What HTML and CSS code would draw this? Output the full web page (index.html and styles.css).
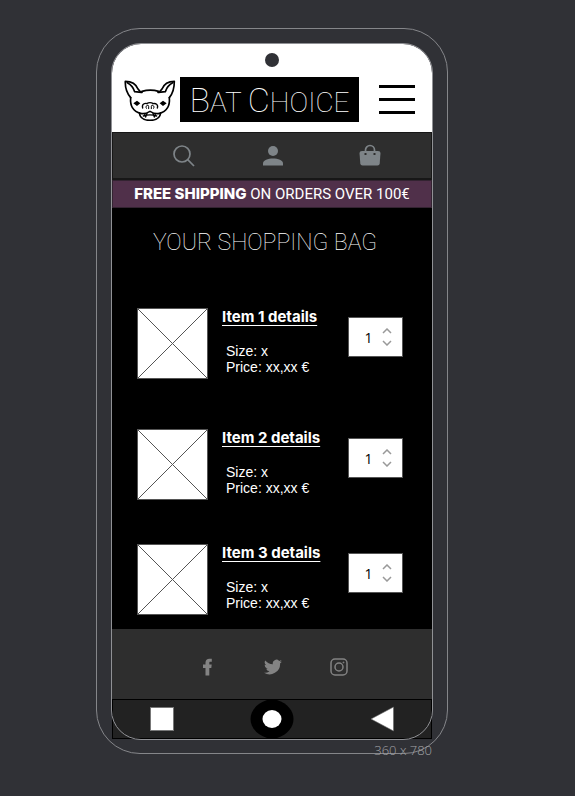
FILE: index.html
```html
<!DOCTYPE html>
<html lang="en">
<head>
<meta charset="utf-8">
<meta name="viewport" content="width=device-width, initial-scale=1">
<title>Bat Choice – Your shopping bag</title>
<link rel="stylesheet" href="styles.css">
</head>
<body>
<div class="phone">
  <div class="screen">
    <header class="header">
      <span class="camera"></span>
      <div class="brand-row">
        <svg class="bat" viewBox="12 18 156 126" aria-hidden="true">
          <g fill="none" stroke="#000" stroke-width="5" stroke-linejoin="round" stroke-linecap="round">
            <path d="M32 74C20 60 15 44 16 25C34 25 48 33 54 48C58 54 62 57 66 58"/>
            <path d="M148 74C160 60 163 44 163 25C145 25 132 33 126 48C122 54 118 57 114 58"/>
            <path d="M22 29C32 34 40 43 44 56L64 58M158 29C148 34 140 43 136 56L116 58"/>
            <path d="M66 55C80 51 102 51 116 55"/>
            <path d="M32 74C30 96 38 115 62 121C72 124 82 120 90 115C98 120 108 124 118 121C142 115 150 96 148 74"/>
            <path d="M58 120C60 136 74 142 90 142C106 142 120 136 122 120"/>
            <path stroke-width="4" d="M68 105C64 92 76 90 80 92C86 88 94 88 100 92C106 90 116 94 112 105"/>
            <path stroke-width="3" d="M79 106C74 99 85 92 86 100V107M101 106C106 99 95 92 94 100V107"/>
            <path stroke-width="4" d="M74 123L77 132L81 121M106 123L103 132L99 121M70 129C82 125 98 125 110 129"/>
          </g>
          <path d="M40 91L51 83L61 91L51 99ZM119 91L129 83L140 91L129 99Z"/>
        </svg>
        <h1 class="brand"><span class="brand-cap">B</span>AT <span class="brand-cap">C</span>HOICE</h1>
        <button class="menu" type="button" aria-label="Menu"><span></span><span></span><span></span></button>
      </div>
    </header>

    <nav class="toolbar" aria-label="Shop">
      <a href="#search" aria-label="Search">
        <svg width="24" height="24" viewBox="0 0 24 24" fill="none" stroke="#7e8488" stroke-width="1.7"><circle cx="10" cy="10" r="8"/><path d="M15.700 15.700L22 22"/></svg>
      </a>
      <a href="#account" aria-label="Account">
        <svg width="24" height="24" viewBox="0 0 24 24" fill="#7e8488"><circle cx="12" cy="7" r="5"/><path d="M2 21.500V19.500C2 16 7 14.500 12 14.500S22 16 22 19.500V21.500Z"/></svg>
      </a>
      <a href="#bag" aria-label="Bag">
        <svg width="24" height="24" viewBox="0 0 24 24"><path d="M7.500 9V6A4.500 4.500 0 0 1 16.500 6V9" fill="none" stroke="#7e8488" stroke-width="1.700"/><path d="M4 7H20Q22.500 7 22.500 9L21.700 19.500Q21.500 21.500 19.500 21.500H4.500Q2.500 21.500 2.300 19.500L1.500 9Q1.500 7 4 7Z" fill="#7e8488"/><path d="M6.500 9H8.500V11H6.500ZM15.500 9H17.500V11H15.500Z" fill="#2e2e2e"/></svg>
      </a>
    </nav>

    <p class="promo"><strong>FREE SHIPPING</strong> ON ORDERS OVER 100€</p>

    <main class="bag">
      <h2 class="bag-title">YOUR SHOPPING BAG</h2>

      <article class="item">
        <svg class="thumb" viewBox="0 0 71 71" aria-hidden="true"><rect x=".5" y=".5" width="70" height="70"/><path d="M1 1L70 70M70 1L1 70"/></svg>
        <div class="info">
          <a class="name" href="#item1">Item 1 details</a>
          <p class="details">Size: x<br>Price: xx,xx €</p>
        </div>
        <div class="stepper">
          <input type="text" inputmode="numeric" value="1" aria-label="Quantity of item 1">
          <div class="steps">
            <button type="button" aria-label="Increase item 1"><svg width="10" height="6" viewBox="0 0 10 6"><path d="M1 5L5 1L9 5"/></svg></button>
            <button type="button" aria-label="Decrease item 1"><svg width="10" height="6" viewBox="0 0 10 6"><path d="M1 1L5 5L9 1"/></svg></button>
          </div>
        </div>
      </article>

      <article class="item">
        <svg class="thumb" viewBox="0 0 71 71" aria-hidden="true"><rect x=".5" y=".5" width="70" height="70"/><path d="M1 1L70 70M70 1L1 70"/></svg>
        <div class="info">
          <a class="name" href="#item2">Item 2 details</a>
          <p class="details">Size: x<br>Price: xx,xx €</p>
        </div>
        <div class="stepper">
          <input type="text" inputmode="numeric" value="1" aria-label="Quantity of item 2">
          <div class="steps">
            <button type="button" aria-label="Increase item 2"><svg width="10" height="6" viewBox="0 0 10 6"><path d="M1 5L5 1L9 5"/></svg></button>
            <button type="button" aria-label="Decrease item 2"><svg width="10" height="6" viewBox="0 0 10 6"><path d="M1 1L5 5L9 1"/></svg></button>
          </div>
        </div>
      </article>

      <article class="item item-last">
        <svg class="thumb" viewBox="0 0 71 71" aria-hidden="true"><rect x=".5" y=".5" width="70" height="70"/><path d="M1 1L70 70M70 1L1 70"/></svg>
        <div class="info">
          <a class="name" href="#item3">Item 3 details</a>
          <p class="details">Size: x<br>Price: xx,xx €</p>
        </div>
        <div class="stepper">
          <input type="text" inputmode="numeric" value="1" aria-label="Quantity of item 3">
          <div class="steps">
            <button type="button" aria-label="Increase item 3"><svg width="10" height="6" viewBox="0 0 10 6"><path d="M1 5L5 1L9 5"/></svg></button>
            <button type="button" aria-label="Decrease item 3"><svg width="10" height="6" viewBox="0 0 10 6"><path d="M1 1L5 5L9 1"/></svg></button>
          </div>
        </div>
      </article>
    </main>

    <footer class="social">
      <a href="#facebook" aria-label="Facebook"><svg width="18" height="18" viewBox="0 0 18 18" fill="#838383"><path d="M7.500 17.500V10H5V6.500H7.500V4.500C7.500 2 9 .700 11.500 .700H13.800V3.700H12.500C11.500 3.700 11.300 4.200 11.300 5V6.500H13.700L13.300 10H11.300V17.500Z"/></svg></a>
      <a href="#twitter" aria-label="Twitter"><svg width="18" height="18" viewBox="0 0 24 24" fill="#838383"><path d="M24 4.600a10 10 0 0 1-2.800.8 5 5 0 0 0 2.100-2.700 10 10 0 0 1-3.100 1.200 4.900 4.900 0 0 0-8.400 4.500A14 14 0 0 1 1.700 3.200a4.900 4.900 0 0 0 1.500 6.500 5 5 0 0 1-2.200-.6 4.900 4.900 0 0 0 3.900 4.900 5 5 0 0 1-2.200.1 4.900 4.900 0 0 0 4.600 3.400A10 10 0 0 1 0 19.500 14 14 0 0 0 21.500 7.100 10 10 0 0 0 24 4.600Z"/></svg></a>
      <a href="#instagram" aria-label="Instagram"><svg width="18" height="18" viewBox="0 0 18 18" fill="none" stroke="#838383" stroke-width="1.500"><rect x="1" y="1" width="16" height="16" rx="4"/><circle cx="9" cy="9" r="4"/><circle cx="13.500" cy="4.500" r=".6" fill="#838383" stroke-width=".6"/></svg></a>
    </footer>

    <nav class="system" aria-label="System">
      <button type="button" aria-label="Recent apps"><svg width="24" height="24" viewBox="0 0 24 24"><rect x=".5" y=".5" width="23" height="23" fill="#fff" stroke="#777"/></svg></button>
      <button type="button" aria-label="Home"><svg width="44" height="38" viewBox="0 0 44 38"><path d="M17 0H27C49 7 49 31 27 38H17C-5 31-5 7 17 0Z"/><ellipse cx="22" cy="19" rx="9.500" ry="9" fill="#fff"/></svg></button>
      <button type="button" aria-label="Back"><svg width="24" height="26" viewBox="0 0 24 26"><path d="M1 13L23.500 1V25Z" fill="#fff" stroke="#666" stroke-width=".6"/></svg></button>
    </nav>
  </div>
  <span class="size">360 x 780</span>
</div>
</body>
</html>
```
FILE: styles.css
```css
* { box-sizing: border-box; }

body {
  margin: 0;
  padding: 28px 31px 28px 0;
  background: #303136;
  color: #fff;
  font-family: "Liberation Sans", Arial, sans-serif;
}

h1, h2, p { margin: 0; }
svg { display: block; }
button { padding: 0; border: 0; background: none; }

.phone {
  position: relative;
  max-width: 352px;
  margin: 0 auto;
  padding: 15px 15px 14px;
  border: 1px solid #85868a;
  border-radius: 44px;
}

.screen { position: relative; }

.screen::after {
  content: "";
  position: absolute;
  inset: -1px;
  border: 1px solid #909195;
  border-radius: 30px;
  pointer-events: none;
}

.header {
  display: flex;
  flex-direction: column;
  align-items: center;
  padding: 9px 17px 10px 12px;
  background: #fff;
  border-radius: 29px 29px 0 0;
}

.camera {
  width: 14px;
  height: 14px;
  margin: 0 0 10px 5px;
  border-radius: 50%;
  background: #303136;
}

.brand-row {
  display: flex;
  align-items: center;
  align-self: stretch;
}

.bat { width: 52px; height: 42px; }

.brand {
  width: 179px;
  height: 45px;
  margin-left: 4px;
  background: #000;
  font: 100 28px/47px Roboto, sans-serif;
  text-align: center;
  white-space: nowrap;
}

.brand-cap { font-size: 34px; }

.menu {
  display: flex;
  flex-direction: column;
  gap: 10px;
  width: 36px;
  margin-left: auto;
}

.menu span { height: 3px; background: #000; }

.toolbar {
  display: grid;
  grid-template-columns: 80fr 98fr 98fr;
  align-items: center;
  justify-items: center;
  height: 48px;
  padding: 0 12px 0 31px;
  border: 1px solid #171717;
  border-bottom-width: 2px;
  background: #2e2e2e;
}

.promo {
  height: 28px;
  border: 1px solid #332331;
  background: #50304a;
  font: 15px/26px Roboto, sans-serif;
  text-align: center;
  white-space: nowrap;
}

.promo strong { font: 800 15px/26px Inter, sans-serif; }

.bag { padding-bottom: 14px; background: #000; }

.bag-title {
  padding: 19px 14px 49px 0;
  font: 100 23px/32px Roboto, sans-serif;
  text-align: center;
}

.item {
  display: grid;
  grid-template-columns: 71px 1fr 55px;
  padding: 0 29px 0 25px;
}

.item + .item { margin-top: 50px; }
.item + .item-last { margin-top: 44px; }

.thumb {
  width: 71px;
  height: 71px;
  fill: #fff;
  stroke: #555;
}

.info { padding-left: 14px; }

.name {
  display: block;
  color: #fff;
  font: 700 15px/18px Inter, sans-serif;
  text-underline-offset: 3px;
}

.details {
  padding: 17px 0 0 4px;
  font-size: 14px;
  line-height: 16px;
}

.stepper {
  display: flex;
  align-items: center;
  height: 40px;
  margin-top: 9px;
  border: 1px solid #555;
  background: #fff;
}

.stepper input {
  width: 33px;
  padding: 0 0 0 6px;
  border: 0;
  background: none;
  color: #000;
  font: 14px "Open Sans", sans-serif;
  text-align: center;
}

.steps { display: grid; gap: 6px; }

.steps path {
  fill: none;
  stroke: #999;
  stroke-width: 1.5;
}

.social {
  display: grid;
  grid-template-columns: repeat(3, 66px);
  align-items: center;
  justify-content: center;
  justify-items: center;
  height: 70px;
  padding: 5px 0 0 2px;
  background: #2e2e2e;
}

.system {
  display: flex;
  align-items: center;
  justify-content: space-between;
  height: 40px;
  padding: 0 37px;
  border: 1px solid #000;
  background: #222;
}

.size {
  position: absolute;
  right: 15px;
  bottom: -6px;
  color: #a2a3a6;
  font: 300 13px/18px "Open Sans", sans-serif;
}
```
